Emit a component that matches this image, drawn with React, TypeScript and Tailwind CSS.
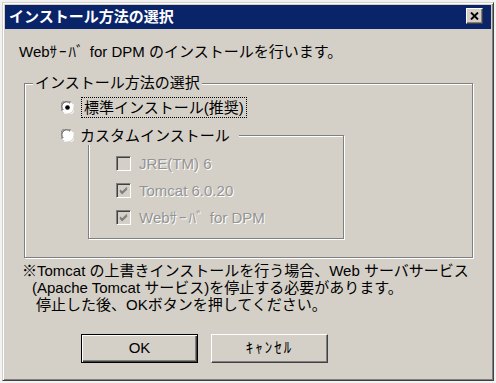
import React from "react";

const font = { fontFamily: '"Liberation Sans", "Noto Sans CJK JP", sans-serif' };

function Radio({ checked }: { checked?: boolean }) {
  return (
    <svg width="13" height="13" viewBox="0 0 13 13" className="shrink-0">
      <circle cx="6.5" cy="6.5" r="6" fill="#ffffff" />
      <path d="M1.2 10 A6 6 0 0 1 10 1.2" fill="none" stroke="#808080" strokeWidth="1" />
      <path d="M2.2 9 A4.8 4.8 0 0 1 9 2.2" fill="none" stroke="#404040" strokeWidth="1" />
      <path d="M11.8 3 A6 6 0 0 1 3 11.8" fill="none" stroke="#ffffff" strokeWidth="1" />
      {checked && <circle cx="6.5" cy="6.5" r="2.3" fill="#000000" />}
    </svg>
  );
}

function Check({ checked }: { checked?: boolean }) {
  return (
    <div className="w-[15px] h-[15px] shrink-0 border border-t-[#808080] border-l-[#808080] border-r-white border-b-white shadow-[inset_1px_1px_#404040,inset_-1px_-1px_#d4d0c8] bg-[#d4d0c8] flex items-center justify-center">
      {checked && (
        <svg width="11" height="11" viewBox="0 0 11 11">
          <path d="M2 5 L4.2 7.3 L9 2.5 M2 6.2 L4.2 8.5 L9 3.7" fill="none" stroke="#808080" strokeWidth="1.3" />
        </svg>
      )}
    </div>
  );
}

function Disabled({ children }: { children: React.ReactNode }) {
  return (
    <span className="text-[15px] leading-[17px] text-[#949494] [text-shadow:1px_1px_0_#ffffff]">
      {children}
    </span>
  );
}

export default function App() {
  return (
    <div className="w-[496px] h-[383px] bg-[#f2f2f2] p-[2px]" style={font}>
      <div className="w-full h-full bg-[#d4d0c8] border border-t-[#d4d0c8] border-l-[#d4d0c8] border-r-[#404040] border-b-[#404040] shadow-[inset_1px_1px_#ffffff,inset_-1px_-1px_#808080] p-[2px] flex flex-col">
        {/* Title bar */}
        <div className="h-[24px] shrink-0 bg-[#0a246a] flex items-start justify-between">
          <span className="text-white font-bold text-[15px] leading-[24px] pl-[4px]">
            インストール方法の選択
          </span>
          <div className="mt-[3px] mr-[8px] w-[17px] h-[16px] bg-[#d4d0c8] border border-t-white border-l-white border-r-[#404040] border-b-[#404040] shadow-[inset_-1px_-1px_#808080] flex items-center justify-center">
            <svg width="9" height="8" viewBox="0 0 9 8">
              <path d="M1 0.5 L8 7.5 M8 0.5 L1 7.5" stroke="#000" strokeWidth="1.9" fill="none" />
            </svg>
          </div>
        </div>

        {/* Body */}
        <div className="pl-[14px] pt-[14px] flex flex-col text-black">
          <div className="text-[15px] leading-[17px]">
            Web<span className="tracking-[2px]">ｻｰﾊﾞ</span> for DPM のインストールを行います。
          </div>

          {/* Group box */}
          <div className="relative mt-[23px] ml-[5px] w-[449px] h-[175px] border border-[#808080] shadow-[inset_1px_1px_#ffffff,1px_1px_#ffffff] flex flex-col">
            <div className="absolute left-[8px] top-[-10px] px-[2px] bg-[#d4d0c8] text-[15px] leading-[17px]">
              インストール方法の選択
            </div>

            <div className="mt-[13px] pl-[36px] h-[21px] flex items-center gap-[7px]">
              <Radio checked />
              <span className="h-[21px] border border-dotted border-black px-[2px] text-[15px] leading-[19px]">
                標準インストール(推奨)
              </span>
            </div>

            {/* Inner group */}
            <div className="relative mt-[17px] ml-[63px] w-[256px] h-[104px] border border-[#808080] shadow-[inset_1px_1px_#ffffff,1px_1px_#ffffff] pl-[27px] pt-[20px] flex flex-col gap-[12px]">
              <div className="absolute left-[-32px] top-[-11px] h-[20px] pl-[4px] pr-[9px] bg-[#d4d0c8] flex items-center gap-[6px]">
                <Radio />
                <span className="text-[15px] leading-[17px]">カスタムインストール</span>
              </div>
              <div className="flex items-center gap-[8px] h-[15px]">
                <Check />
                <Disabled>JRE(TM) 6</Disabled>
              </div>
              <div className="flex items-center gap-[8px] h-[15px]">
                <Check checked />
                <Disabled>Tomcat 6.0.20</Disabled>
              </div>
              <div className="flex items-center gap-[8px] h-[15px]">
                <Check checked />
                <Disabled>
                  Web<span className="tracking-[2px]">ｻｰﾊﾞ</span> for DPM
                </Disabled>
              </div>
            </div>
          </div>

          {/* Note */}
          <div className="mt-[4px] ml-[3px] text-[15px] leading-[17px] flex flex-col">
            <div>※Tomcat の上書きインストールを行う場合、Web サーバサービス</div>
            <div className="pl-[10px]">(Apache Tomcat サービス)を停止する必要があります。</div>
            <div className="pl-[14px]">停止した後、OKボタンを押してください。</div>
          </div>

          {/* Buttons */}
          <div className="mt-[21px] ml-[62px] flex gap-[13px]">
            <div className="w-[117px] h-[29px] border border-black shadow-[inset_1px_1px_#ffffff,inset_-1px_-1px_#404040,inset_-2px_-2px_#808080] flex items-center justify-center text-[15px]">
              OK
            </div>
            <div className="w-[117px] h-[29px] border border-t-white border-l-white border-r-[#404040] border-b-[#404040] shadow-[inset_-1px_-1px_#808080] flex items-center justify-center text-[15px] tracking-[2px]">
              ｷｬﾝｾﾙ
            </div>
          </div>
        </div>
      </div>
    </div>
  );
}
